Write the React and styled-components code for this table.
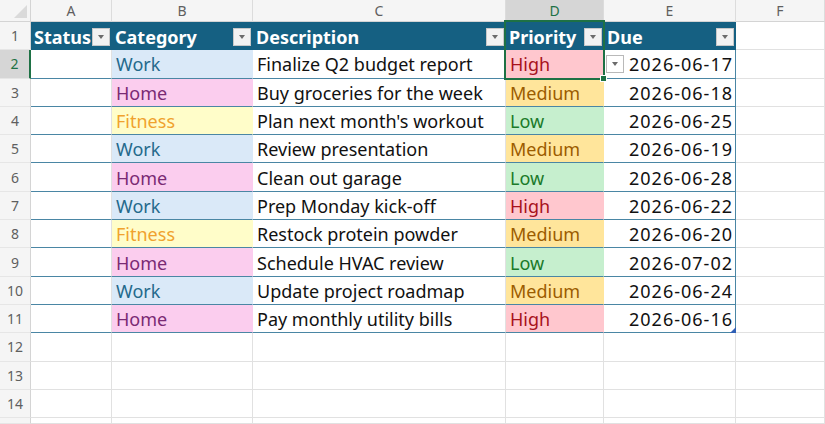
import React from 'react';
import styled, { createGlobalStyle, css } from 'styled-components';

const GlobalStyle = createGlobalStyle`
  html, body {
    margin: 0;
    padding: 0;
    background: #ffffff;
    overflow: hidden;
  }
  body {
    font-family: "Noto Sans", "Liberation Sans", sans-serif;
  }
`;

const GREEN = '#1e7145';
const TABLE_BLUE = '#156082';
const TABLE_LINE = '#4a86a4';
const GRID = '#e1e1e1';

const CATEGORY = {
  Work: { bg: '#dae9f8', fg: '#24698c' },
  Home: { bg: '#fbcdee', fg: '#7a2a74' },
  Fitness: { bg: '#fffdc9', fg: '#f0a22e' },
};

const PRIORITY = {
  High: { bg: '#ffc7ce', fg: '#a8121c' },
  Medium: { bg: '#ffe59b', fg: '#9c5c00' },
  Low: { bg: '#c6efce', fg: '#1a7a2a' },
};

const tasks = [
  ['Work', 'Finalize Q2 budget report', 'High', '2026-06-17'],
  ['Home', 'Buy groceries for the week', 'Medium', '2026-06-18'],
  ['Fitness', "Plan next month's workout", 'Low', '2026-06-25'],
  ['Work', 'Review presentation', 'Medium', '2026-06-19'],
  ['Home', 'Clean out garage', 'Low', '2026-06-28'],
  ['Work', 'Prep Monday kick-off', 'High', '2026-06-22'],
  ['Fitness', 'Restock protein powder', 'Medium', '2026-06-20'],
  ['Home', 'Schedule HVAC review', 'Low', '2026-07-02'],
  ['Work', 'Update project roadmap', 'Medium', '2026-06-24'],
  ['Home', 'Pay monthly utility bills', 'High', '2026-06-16'],
];

const letters = ['A', 'B', 'C', 'D', 'E', 'F'];
const headers = ['Status', 'Category', 'Description', 'Priority', 'Due'];
const VISIBLE_ROWS = 14;

const Sheet = styled.div`
  display: grid;
  grid-template-columns: 31px 81px 141px 253px 98px 132px 1fr;
  grid-template-rows: 22px repeat(${VISIBLE_ROWS}, 28.3px) 1fr;
  width: 825px;
  height: 424px;
  overflow: hidden;
  font-family: "Noto Sans", "Liberation Sans", sans-serif;
`;

const Corner = styled.div`
  position: relative;
  background: #f5f5f5;
  border-right: 1px solid #d4d4d4;
  border-bottom: 1px solid #d4d4d4;
  overflow: hidden;

  &::after {
    content: "";
    position: absolute;
    right: 3px;
    bottom: 3px;
    border-left: 13px solid transparent;
    border-bottom: 13px solid #dadada;
  }
`;

const ColHeader = styled.div`
  display: flex;
  align-items: center;
  justify-content: center;
  font-size: 14px;
  color: #5f5f5f;
  background: #f5f5f5;
  border-right: 1px solid #dcdcdc;
  border-bottom: 1px solid #d4d4d4;

  ${(p) => p.$selected && css`
    background: #d6d6d6;
    color: ${GREEN};
    border-bottom: 2px solid ${GREEN};
  `}
`;

const RowHeader = styled.div`
  display: flex;
  align-items: center;
  justify-content: center;
  font-size: 14px;
  color: #5f5f5f;
  background: #f5f5f5;
  border-right: 1px solid #d4d4d4;
  border-bottom: 1px solid #e6e6e6;

  ${(p) => p.$selected && css`
    background: #d6d6d6;
    color: ${GREEN};
    border-right: 2px solid ${GREEN};
  `}
`;

const Cell = styled.div`
  position: relative;
  display: flex;
  align-items: center;
  justify-content: ${(p) => (p.$right ? 'flex-end' : 'flex-start')};
  padding: 1px ${(p) => (p.$right ? '3px' : '4px')} 0;
  font-size: 18px;
  white-space: nowrap;
  letter-spacing: ${(p) => (p.$right ? '1px' : 'normal')};
  color: ${(p) => p.$fg || '#111'};
  background: ${(p) => p.$bg || '#fff'};
  border-right: 1px solid ${(p) => p.$bg || GRID};
  border-bottom: 1px solid ${(p) => (p.$inTable ? TABLE_LINE : GRID)};

  ${(p) => p.$tableEdge && css`
    border-right: 1px solid ${TABLE_LINE};
    padding-right: 2px;
  `}
  ${(p) => p.$active && css`
    z-index: 3;
  `}
`;

const HeaderCell = styled.div`
  display: flex;
  align-items: center;
  justify-content: space-between;
  padding: 2px 2px 0 3px;
  font-size: 18px;
  font-weight: 700;
  color: #ffffff;
  background: ${TABLE_BLUE};
  border-bottom: 1px solid ${TABLE_BLUE};
  white-space: nowrap;
`;

const FilterButton = styled.span`
  display: flex;
  align-items: center;
  justify-content: center;
  width: 16px;
  height: 16px;
  flex: none;
  background: #f2f2f2;
  border: 1px solid #c8c8c8;

  &::after {
    content: "";
    border-left: 3px solid transparent;
    border-right: 3px solid transparent;
    border-top: 4px solid #6b6b6b;
    margin-top: 1px;
  }
`;

const SelectionBox = styled.div`
  position: absolute;
  left: -2px;
  right: -2px;
  bottom: -2px;
  top: -30px;
  border: 2px solid ${GREEN};
  pointer-events: none;

  &::after {
    content: "";
    position: absolute;
    right: -4px;
    bottom: -4px;
    width: 5px;
    height: 5px;
    background: ${GREEN};
    border: 1px solid #fff;
  }
`;

const ValidationButton = styled.span`
  position: absolute;
  right: -21px;
  top: 50%;
  transform: translateY(-50%);
  width: 16px;
  height: 16px;
  display: flex;
  align-items: center;
  justify-content: center;
  background: #ffffff;
  border: 1px solid #b9b9b9;

  &::after {
    content: "";
    border-left: 3px solid transparent;
    border-right: 3px solid transparent;
    border-top: 4px solid #6b6b6b;
    margin-top: 1px;
  }
`;

const ResizeHandle = styled.span`
  position: absolute;
  right: -1px;
  bottom: -1px;
  border-left: 6px solid transparent;
  border-bottom: 6px solid #2f5fb5;
`;

const App = () => {
  const cells = [];

  cells.push(<Corner key="corner" />);
  letters.forEach((l) => {
    cells.push(
      <ColHeader key={`col-${l}`} $selected={l === 'D'}>
        {l}
      </ColHeader>
    );
  });

  // rows 1..14 are fully visible, the last grid row is the clipped top of row 15
  for (let r = 1; r <= VISIBLE_ROWS + 1; r++) {
    cells.push(
      <RowHeader key={`row-${r}`} $selected={r === 2}>
        {r <= VISIBLE_ROWS ? r : null}
      </RowHeader>
    );

    if (r === 1) {
      headers.forEach((h) => {
        cells.push(
          <HeaderCell key={`h-${h}`}>
            {h}
            <FilterButton />
          </HeaderCell>
        );
      });
      cells.push(<Cell key="h-f" />);
      continue;
    }

    const task = tasks[r - 2];
    if (!task) {
      for (let c = 0; c < 6; c++) cells.push(<Cell key={`e-${r}-${c}`} />);
      continue;
    }

    const [cat, desc, prio, due] = task;
    const isLast = r === tasks.length + 1;
    cells.push(<Cell key={`a-${r}`} $inTable />);
    cells.push(
      <Cell key={`b-${r}`} $inTable $bg={CATEGORY[cat].bg} $fg={CATEGORY[cat].fg}>
        {cat}
      </Cell>
    );
    cells.push(
      <Cell key={`c-${r}`} $inTable>
        {desc}
      </Cell>
    );
    cells.push(
      <Cell
        key={`d-${r}`}
        $inTable
        $active={r === 2}
        $bg={PRIORITY[prio].bg}
        $fg={PRIORITY[prio].fg}
      >
        {prio}
        {r === 2 && (
          <>
            <SelectionBox />
            <ValidationButton />
          </>
        )}
      </Cell>
    );
    cells.push(
      <Cell key={`e-${r}`} $inTable $right $tableEdge>
        {due}
        {isLast && <ResizeHandle />}
      </Cell>
    );
    cells.push(<Cell key={`f-${r}`} />);
  }

  return (
    <>
      <GlobalStyle />
      <Sheet>{cells}</Sheet>
    </>
  );
};

export default App;
